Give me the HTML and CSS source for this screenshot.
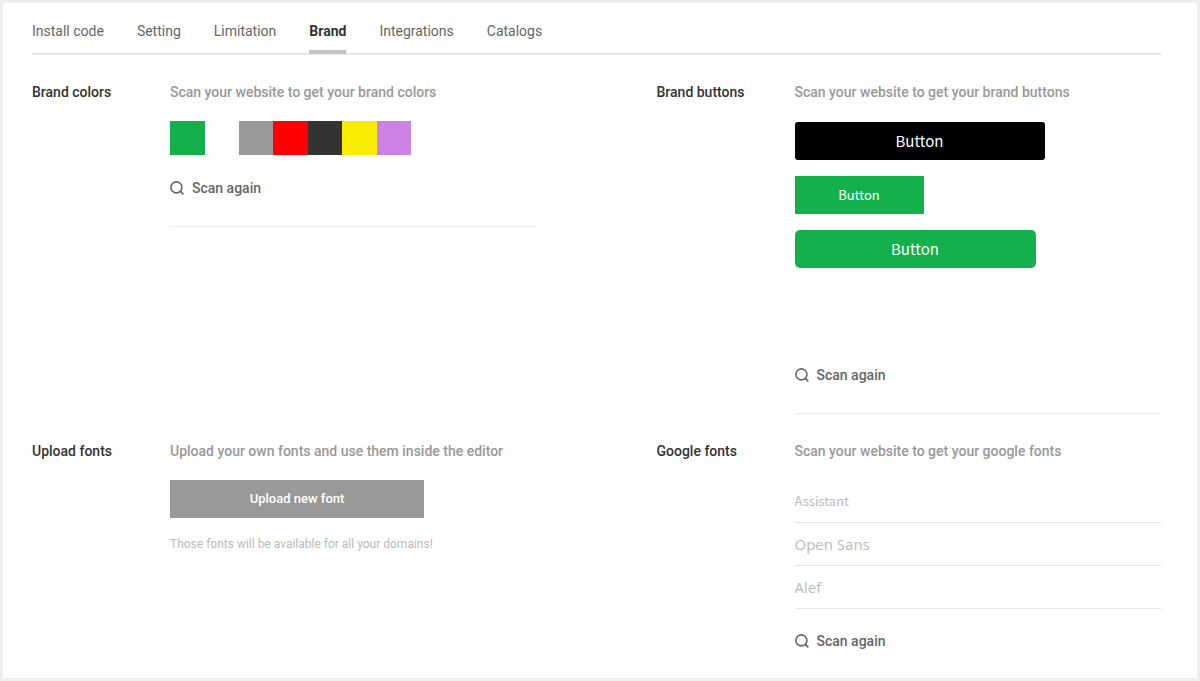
FILE: index.html
```html
<!DOCTYPE html>
<html lang="en">
<head>
<meta charset="utf-8">
<title>Brand settings</title>
<link rel="stylesheet" href="styles.css">
</head>
<body>
<svg class="sprite" aria-hidden="true">
  <symbol id="search" viewBox="0 0 14 14">
    <circle cx="6.4" cy="6.4" r="5.5" fill="none" stroke="currentColor" stroke-width="1.6"/>
    <path d="M10.2 10.2 13.3 13.3" fill="none" stroke="currentColor" stroke-width="1.8"/>
  </symbol>
</svg>
<main class="panel">
  <nav class="tabs">
    <a class="tab" href="#install">Install code</a>
    <a class="tab" href="#setting">Setting</a>
    <a class="tab" href="#limitation">Limitation</a>
    <a class="tab tab-active" href="#brand" aria-current="page">Brand</a>
    <a class="tab" href="#integrations">Integrations</a>
    <a class="tab" href="#catalogs">Catalogs</a>
  </nav>

  <div class="sections">
    <section class="section">
      <h2 class="title">Brand colors</h2>
      <div class="content">
        <p class="lead">Scan your website to get your brand colors</p>
        <div class="swatches">
          <span class="swatch swatch-primary"></span>
          <span class="swatch gray"></span>
          <span class="swatch red"></span>
          <span class="swatch dark"></span>
          <span class="swatch yellow"></span>
          <span class="swatch purple"></span>
        </div>
        <div class="footer">
          <button class="scan" type="button"><svg class="icon" aria-hidden="true"><use href="#search"/></svg>Scan again</button>
        </div>
      </div>
    </section>

    <section class="section">
      <h2 class="title">Brand buttons</h2>
      <div class="content">
        <p class="lead">Scan your website to get your brand buttons</p>
        <div class="buttons">
          <button class="sample sample-black" type="button">Button</button>
          <button class="sample sample-square" type="button">Button</button>
          <button class="sample sample-round" type="button">Button</button>
        </div>
        <div class="footer">
          <button class="scan" type="button"><svg class="icon" aria-hidden="true"><use href="#search"/></svg>Scan again</button>
        </div>
      </div>
    </section>

    <section class="section">
      <h2 class="title">Upload fonts</h2>
      <div class="content">
        <p class="lead">Upload your own fonts and use them inside the editor</p>
        <button class="upload" type="button">Upload new font</button>
        <p class="note">Those fonts will be available for all your domains!</p>
      </div>
    </section>

    <section class="section">
      <h2 class="title">Google fonts</h2>
      <div class="content">
        <p class="lead">Scan your website to get your google fonts</p>
        <ul class="fonts">
          <li class="font font-assistant">Assistant</li>
          <li class="font">Open Sans</li>
          <li class="font">Alef</li>
        </ul>
        <button class="scan" type="button"><svg class="icon" aria-hidden="true"><use href="#search"/></svg>Scan again</button>
      </div>
    </section>
  </div>
</main>
</body>
</html>
```
FILE: styles.css
```css
* {
  box-sizing: border-box;
}

body {
  margin: 0;
  background: #fff;
  color: #666;
  font: 500 14px/20px Roboto, "Liberation Sans", sans-serif;
}

h2, p, ul {
  margin: 0;
  padding: 0;
}

button {
  border: 0;
  padding: 0;
  font: inherit;
  cursor: pointer;
}

.sprite {
  display: none;
}

.panel {
  min-height: 100vh;
  border: 3px solid #eee;
  padding: 18px 36px 16px 29px;
}

.tabs {
  display: flex;
  gap: 33px;
  border-bottom: 2px solid #e6e6e6;
}

.tab {
  padding-bottom: 12px;
  color: #666;
  font-weight: 400;
  text-decoration: none;
}

.tab-active {
  margin-bottom: -1px;
  border-bottom: 4px solid #c2c2c2;
  padding-bottom: 8px;
  color: #333;
  font-weight: 700;
}

.sections {
  display: grid;
  grid-template-columns: 1fr 1fr;
  gap: 27px 120px;
  padding-top: 27px;
}

.section {
  display: grid;
  grid-template-columns: 138px 1fr;
  align-items: start;
}

.title {
  color: #333;
  font-size: 14px;
  font-weight: 500;
}

.lead {
  margin-bottom: 19px;
  color: #999;
}

.swatches {
  display: flex;
  width: 241px;
  margin-bottom: 23px;
}

.swatch {
  flex: 1;
  height: 34px;
}

.swatch-primary {
  margin-right: 34px;
  background: #14b04b;
}

.gray { background: #999; }
.red { background: #f00; }
.dark { background: #333; }
.yellow { background: #faed04; }
.purple { background: #cb82e3; }

.footer {
  border-bottom: 1px solid #ebebeb;
  padding-bottom: 28px;
}

.scan {
  display: flex;
  align-items: center;
  gap: 8px;
  background: none;
  color: #666;
}

.icon {
  width: 14px;
  height: 14px;
}

.buttons {
  display: flex;
  flex-direction: column;
  align-items: flex-start;
  gap: 16px;
  min-height: 244px;
  padding-top: 1px;
}

.sample {
  height: 38px;
  background: #14b04b;
  color: #fff;
  font: 400 15px/20px "Noto Sans CJK SC", sans-serif;
}

.sample-black {
  width: 250px;
  border-radius: 3px;
  background: #000;
}

.sample-square {
  width: 129px;
  font-size: 13px;
}

.sample-round {
  width: 241px;
  border-radius: 5px;
}

.upload {
  width: 254px;
  height: 38px;
  margin-bottom: 16px;
  background: #999;
  color: #fff;
  font-size: 13px;
}

.note {
  color: #bbb;
  font-size: 12px;
  font-weight: 400;
}

.fonts {
  margin-bottom: 22px;
  list-style: none;
}

.font {
  border-bottom: 1px solid #e6e6e6;
  padding: 11px 0;
  color: #bbb;
  font: 400 15px/20px "Open Sans", sans-serif;
}

.font-assistant {
  font-family: "Noto Sans CJK SC", sans-serif;
  font-size: 13px;
}
```
